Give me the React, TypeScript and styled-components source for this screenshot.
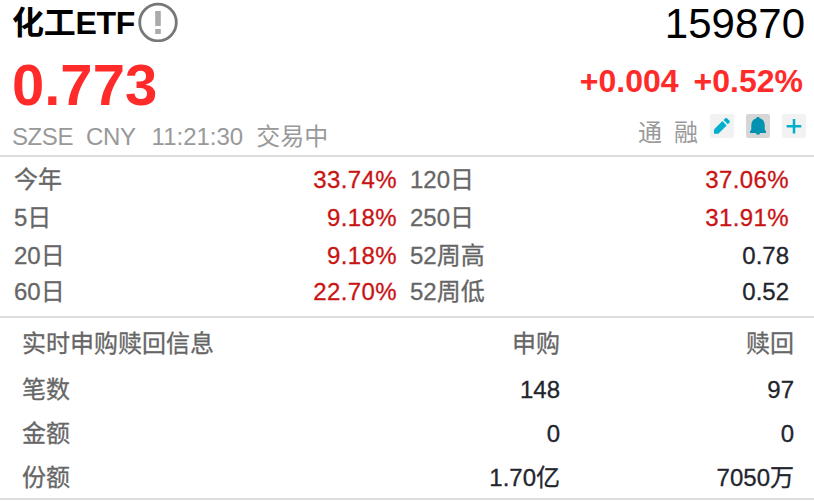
import styled, { createGlobalStyle } from "styled-components";

const color = {
  Black: "#000000",
  Text: "#23252d",
  Label: "#666666",
  Muted: "#999999",
  Line: "#dddddd",
  Up: "#ff2b2b",
  UpDark: "#c91414",
  Cyan: "#00b0cb",
  Teal: "#0092b0",
};

const GlobalStyle = createGlobalStyle`
  body {
    margin: 0;
    background: #ffffff;
    font-family: "Liberation Sans", "Noto Sans CJK SC", sans-serif;
  }
`;

const Layout = styled.div`
  width: 814px;
  height: 502px;
  overflow: hidden;
  white-space: nowrap;
`;

const Header = styled.header`
  display: flex;
  justify-content: space-between;
  box-sizing: border-box;
  height: 157px;
  padding: 0 10px 0 12px;
  border-bottom: 2px solid ${color.Line};
`;

const Column = styled.div<{ $end?: boolean }>`
  display: flex;
  flex-direction: column;
  align-items: ${(props) => (props.$end ? "flex-end" : "flex-start")};
`;

const Name = styled.h1`
  display: flex;
  align-items: center;
  gap: 3px;
  height: 46px;
  margin: 0;
  font-size: 32px;
  letter-spacing: -0.3px;
  line-height: 46px;
  color: ${color.Black};
`;

const NoticeIcon = styled.svg`
  width: 40px;
  height: 40px;
  margin-top: -2px;
`;

const Price = styled.div`
  font-size: 58px;
  font-weight: bold;
  line-height: 78px;
  color: ${color.Up};
`;

const Meta = styled.div`
  display: flex;
  gap: 13px;
  font-size: 24px;
  line-height: 25px;
  color: ${color.Muted};
`;

const Market = styled.span`
  letter-spacing: -0.4px;
`;

const Time = styled.span`
  margin-left: 3px;
`;

const Code = styled.div`
  font-size: 42px;
  line-height: 47px;
  margin-right: -1px;
  color: ${color.Black};
`;

const Change = styled.div`
  display: flex;
  gap: 15px;
  margin-right: 1px;
  padding-top: 1px;
  font-size: 32px;
  font-weight: bold;
  line-height: 66px;
  color: ${color.Up};
`;

const Actions = styled.div`
  display: flex;
  gap: 12px;
  margin-right: -2px;
`;

const Tag = styled.span`
  padding-top: 7px;
  font-size: 24px;
  line-height: 24px;
  color: ${color.Muted};
`;

const IconButton = styled.button<{ $active?: boolean }>`
  display: flex;
  align-items: center;
  justify-content: center;
  width: 24px;
  height: 24px;
  padding: 0;
  border: none;
  border-radius: 2px;
  background: ${(props) => (props.$active ? "#d6d6d6" : "#f2f2f2")};
`;

const Performance = styled.section`
  display: grid;
  grid-template-columns: 383px 379px;
  grid-template-rows: 38px 38px 38px 34px;
  column-gap: 13px;
  align-items: center;
  box-sizing: border-box;
  height: 161px;
  padding: 4px 0 0 14px;
  border-bottom: 2px solid ${color.Line};
`;

const Stat = styled.div`
  display: flex;
  justify-content: space-between;
  font-size: 24px;
  line-height: 34px;
`;

const Label = styled.span`
  color: ${color.Label};
  -webkit-text-stroke: 0.3px;
`;

const Value = styled.span<{ $up?: boolean }>`
  color: ${(props) => (props.$up ? color.UpDark : color.Text)};
  letter-spacing: ${(props) => (props.$up ? "0.4px" : "0")};
  -webkit-text-stroke: 0.3px;
`;

const Table = styled.section`
  display: flex;
  flex-direction: column;
  gap: 4px;
  box-sizing: border-box;
  height: 182px;
  padding: 6px 20px 0 22px;
  border-bottom: 2px solid ${color.Line};
`;

const TableRow = styled.div<{ $head?: boolean }>`
  display: grid;
  grid-template-columns: 304px 234px 234px;
  margin-bottom: ${(props) => (props.$head ? "2px" : "0")};
  font-size: 24px;
  line-height: 40px;

  & > :not(:first-child) {
    text-align: right;
  }
`;

const stats = [
  { label: "今年", value: "33.74%", up: true },
  { label: "120日", value: "37.06%", up: true },
  { label: "5日", value: "9.18%", up: true },
  { label: "250日", value: "31.91%", up: true },
  { label: "20日", value: "9.18%", up: true },
  { label: "52周高", value: "0.78", up: false },
  { label: "60日", value: "22.70%", up: true },
  { label: "52周低", value: "0.52", up: false },
];

const rows = [
  { label: "笔数", buy: "148", redeem: "97" },
  { label: "金额", buy: "0", redeem: "0" },
  { label: "份额", buy: "1.70亿", redeem: "7050万" },
];

const App = () => {
  return (
    <Layout>
      <GlobalStyle />
      <Header>
        <Column>
          <Name>
            <span>化工ETF</span>
            <NoticeIcon viewBox="0 0 40 40">
              <circle cx="20" cy="20.5" r="18.3" fill="none" stroke="#777777" strokeWidth="2.8" />
              <path d="M17.2 9h5.6v15h-5.6zM17.2 27h5.6v5h-5.6z" fill="#aaaaaa" />
            </NoticeIcon>
          </Name>
          <Price>0.773</Price>
          <Meta>
            <Market>SZSE</Market>
            <Market>CNY</Market>
            <Time>11:21:30</Time>
            <span>交易中</span>
          </Meta>
        </Column>
        <Column $end>
          <Code>159870</Code>
          <Change>
            <span>+0.004</span>
            <span>+0.52%</span>
          </Change>
          <Actions>
            <Tag>通</Tag>
            <Tag>融</Tag>
            <IconButton aria-label="edit">
              <svg width="24" height="24" viewBox="0 0 24 24" fill={color.Cyan}>
                <path d="M4 15.5 12.4 7.1 16.7 11.4 8.3 19.8H4z" />
                <path d="M13.5 6 15.3 4.3q.9-.8 1.8 0l2.4 2.4q.9.9 0 1.8L17.8 10.3z" />
              </svg>
            </IconButton>
            <IconButton $active aria-label="alert">
              <svg width="24" height="24" viewBox="0 0 24 24" fill={color.Teal}>
                <path d="M12 3c1 0 1.5.5 1.6 1.2C17 5 18.6 7.6 18.7 11v4.5l1.3 2V19H4v-1.5l1.3-2V11C5.4 7.6 7 5 10.4 4.2 10.5 3.5 11 3 12 3z" />
                <path d="M9.8 18.5h4.4a2.2 2.2 0 0 1-4.4 0z" />
              </svg>
            </IconButton>
            <IconButton aria-label="add">
              <svg width="24" height="24" viewBox="0 0 24 24">
                <path d="M12 5v14.5M4.7 12.2h14.6" stroke={color.Cyan} strokeWidth="2.5" />
              </svg>
            </IconButton>
          </Actions>
        </Column>
      </Header>
      <Performance>
        {stats.map((stat) => (
          <Stat key={stat.label}>
            <Label>{stat.label}</Label>
            <Value $up={stat.up}>{stat.value}</Value>
          </Stat>
        ))}
      </Performance>
      <Table>
        <TableRow $head>
          <Label>实时申购赎回信息</Label>
          <Label>申购</Label>
          <Label>赎回</Label>
        </TableRow>
        {rows.map((row) => (
          <TableRow key={row.label}>
            <Label>{row.label}</Label>
            <Value>{row.buy}</Value>
            <Value>{row.redeem}</Value>
          </TableRow>
        ))}
      </Table>
    </Layout>
  );
};

export default App;
